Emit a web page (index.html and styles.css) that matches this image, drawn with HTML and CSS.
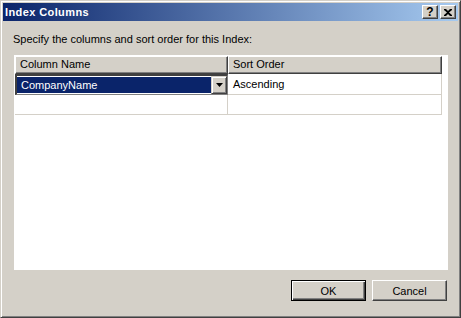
FILE: index.html
```html
<!DOCTYPE html>
<html>
<head>
<meta charset="utf-8">
<link rel="stylesheet" href="styles.css">
</head>
<body>
<div class="window">
  <div class="titlebar">
    <span class="title">Index Columns</span>
    <div class="tbtns">
      <span class="tbtn help">?</span>
      <span class="tbtn close"><svg width="8" height="7" viewBox="0 0 8 7"><path d="M0 0h2l2 2 2-2h2v1L5 3.5 8 6v1H6L4 5 2 7H0V6l3-2.5L0 1z" fill="#000"/></svg></span>
    </div>
  </div>
  <div class="client">
    <div class="label">Specify the columns and sort order for this Index:</div>
    <div class="grid">
      <div class="hrow">
        <div class="hcell c1">Column Name</div>
        <div class="hcell c2">Sort Order</div>
      </div>
      <div class="row">
        <div class="cell c1 combo">
          <span class="sel">CompanyName</span>
          <span class="dd"><svg width="7" height="4" viewBox="0 0 7 4"><path d="M0 0h7L3.5 4z" fill="#000"/></svg></span>
        </div>
        <div class="cell c2">Ascending</div>
      </div>
      <div class="row">
        <div class="cell c1"></div>
        <div class="cell c2"></div>
      </div>
    </div>
    <div class="buttons">
      <div class="btn default"><span>OK</span></div>
      <div class="btn"><span>Cancel</span></div>
    </div>
  </div>
</div>
</body>
</html>
```

FILE: styles.css
```css
html, body {
  margin: 0;
  padding: 0;
  background: #d4d0c8;
}
body {
  font-family: "Liberation Sans", Arial, sans-serif;
  font-size: 11px;
  color: #000;
}
.window {
  width: 461px;
  height: 318px;
  box-sizing: border-box;
  border: 1px solid;
  border-color: #d4d0c8 #404040 #404040 #d4d0c8;
  background: #d4d0c8;
  box-shadow: inset 1px 1px 0 #fff, inset -1px -1px 0 #808080;
  padding: 2px;
  display: flex;
  flex-direction: column;
}
.titlebar {
  height: 18px;
  flex: none;
  background: linear-gradient(to right, #0a246a, #a6caf0);
  display: flex;
  align-items: center;
  justify-content: space-between;
}
.title {
  color: #fff;
  font-weight: bold;
  padding-left: 2px;
  line-height: 18px;
  letter-spacing: 0.4px;
}
.tbtns {
  display: flex;
  gap: 2px;
  padding-right: 2px;
}
.tbtn {
  width: 16px;
  height: 14px;
  box-sizing: border-box;
  background: #d4d0c8;
  border: 1px solid;
  border-color: #fff #404040 #404040 #fff;
  box-shadow: inset -1px -1px 0 #808080;
  display: flex;
  align-items: center;
  justify-content: center;
}
.tbtn.help {
  font-weight: bold;
  font-size: 12px;
  line-height: 12px;
}
.client {
  flex: 1;
  display: flex;
  flex-direction: column;
  padding: 0 10px 0 11px;
}
.label {
  margin-top: 12px;
  line-height: 13px;
  margin-left: -1px;
}
.grid {
  margin-top: 9px;
  height: 215px;
  background: #fff;
  padding: 1px 0 0 1px;
  box-sizing: border-box;
}
.hrow, .row {
  display: flex;
}
.c1 { width: 213px; }
.c2 { width: 214px; }
.hcell {
  height: 18px;
  box-sizing: border-box;
  background: #d4d0c8;
  border: 1px solid;
  border-color: #fff #404040 #404040 #fff;
  box-shadow: inset -1px -1px 0 #808080;
  padding-left: 4px;
  line-height: 15px;
}
.cell {
  height: 21px;
  box-sizing: border-box;
  border-right: 1px solid #d4d0c8;
  border-bottom: 1px solid #d4d0c8;
  padding-left: 5px;
  line-height: 20px;
}
.row + .row .cell { height: 20px; }
.cell.combo {
  padding: 0;
  display: flex;
  border: 2px solid #404040;
  border-right-width: 1px;
  border-bottom-width: 1px;
  border-color: #404040 #808080 #808080 #404040;
}
.sel {
  flex: 1;
  background: #0a246a;
  color: #fff;
  padding-left: 4px;
  line-height: 17px;
  margin: 1px 0 1px 0;
}
.dd {
  width: 16px;
  flex: none;
  box-sizing: border-box;
  background: #d4d0c8;
  border: 1px solid;
  border-color: #d4d0c8 #404040 #404040 #d4d0c8;
  box-shadow: inset 1px 1px 0 #fff, inset -1px -1px 0 #808080;
  display: flex;
  align-items: center;
  justify-content: center;
}
.buttons {
  margin-top: 10px;
  display: flex;
  justify-content: flex-end;
  gap: 6px;
  padding-right: 1px;
}
.btn {
  width: 75px;
  height: 21px;
  box-sizing: border-box;
  border: 1px solid;
  border-color: #fff #404040 #404040 #fff;
  box-shadow: inset -1px -1px 0 #808080;
  display: flex;
  align-items: center;
  justify-content: center;
}
.btn.default {
  border: 1px solid #000;
  box-shadow: inset 1px 1px 0 #fff, inset -1px -1px 0 #404040, inset -2px -2px 0 #808080;
}
```
